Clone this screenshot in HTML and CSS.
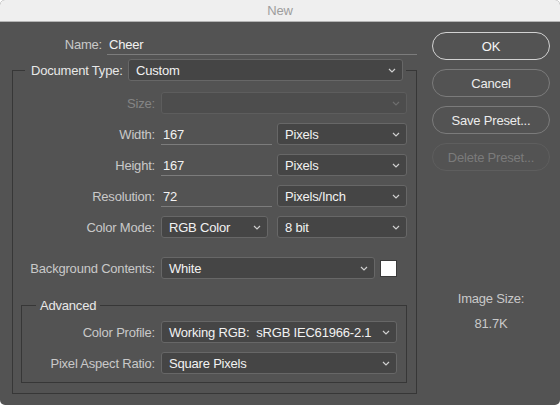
FILE: index.html
```html
<!DOCTYPE html>
<html>
<head>
<meta charset="utf-8">
<link rel="stylesheet" href="styles.css">
</head>
<body>
<div class="window">
  <div class="titlebar">New</div>
  <div class="body">
    <div class="main">
      <div class="name-row">
        <span class="lbl name-lbl">Name:</span>
        <div class="textfield name-field">Cheer</div>
      </div>
      <div class="group">
        <div class="group-head">
          <span class="lbl strong doc-lbl">Document Type:</span>
          <div class="select doc-select"><span>Custom</span><svg class="chev" width="8" height="5" viewBox="0 0 8 5"><polyline points="1,1 4,4 7,1"/></svg></div>
        </div>
        <div class="row first">
          <span class="lbl dis">Size:</span>
          <div class="select disabled size-select"><span></span><svg class="chev" width="8" height="5" viewBox="0 0 8 5"><polyline points="1,1 4,4 7,1"/></svg></div>
        </div>
        <div class="row">
          <span class="lbl">Width:</span>
          <div class="textfield num">167</div>
          <div class="select unit"><span>Pixels</span><svg class="chev" width="8" height="5" viewBox="0 0 8 5"><polyline points="1,1 4,4 7,1"/></svg></div>
        </div>
        <div class="row">
          <span class="lbl">Height:</span>
          <div class="textfield num">167</div>
          <div class="select unit"><span>Pixels</span><svg class="chev" width="8" height="5" viewBox="0 0 8 5"><polyline points="1,1 4,4 7,1"/></svg></div>
        </div>
        <div class="row">
          <span class="lbl">Resolution:</span>
          <div class="textfield num">72</div>
          <div class="select unit"><span>Pixels/Inch</span><svg class="chev" width="8" height="5" viewBox="0 0 8 5"><polyline points="1,1 4,4 7,1"/></svg></div>
        </div>
        <div class="row">
          <span class="lbl">Color Mode:</span>
          <div class="select mode"><span>RGB Color</span><svg class="chev" width="8" height="5" viewBox="0 0 8 5"><polyline points="1,1 4,4 7,1"/></svg></div>
          <div class="select unit bits"><span>8 bit</span><svg class="chev" width="8" height="5" viewBox="0 0 8 5"><polyline points="1,1 4,4 7,1"/></svg></div>
        </div>
        <div class="row bg-row">
          <span class="lbl">Background Contents:</span>
          <div class="select bg-select"><span>White</span><svg class="chev" width="8" height="5" viewBox="0 0 8 5"><polyline points="1,1 4,4 7,1"/></svg></div>
          <div class="swatch"></div>
        </div>
        <div class="subgroup">
          <div class="subgroup-head">Advanced</div>
          <div class="row sub first-sub">
            <span class="lbl">Color Profile:</span>
            <div class="select profile"><span>Working RGB:&nbsp; sRGB IEC61966-2.1</span><svg class="chev" width="8" height="5" viewBox="0 0 8 5"><polyline points="1,1 4,4 7,1"/></svg></div>
          </div>
          <div class="row sub">
            <span class="lbl">Pixel Aspect Ratio:</span>
            <div class="select profile"><span>Square Pixels</span><svg class="chev" width="8" height="5" viewBox="0 0 8 5"><polyline points="1,1 4,4 7,1"/></svg></div>
          </div>
        </div>
      </div>
    </div>
    <div class="side">
      <div class="btn primary">OK</div>
      <div class="btn">Cancel</div>
      <div class="btn">Save Preset...</div>
      <div class="btn off">Delete Preset...</div>
      <div class="info-label">Image Size:</div>
      <div class="info-value">81.7K</div>
    </div>
  </div>
</div>
</body>
</html>
```

FILE: styles.css
```css
* { box-sizing: border-box; }
html, body { margin: 0; padding: 0; background: #ffffff; }
body {
  font-family: "Liberation Sans", Arial, sans-serif;
  font-size: 13px;
  letter-spacing: -0.2px;
}
.window {
  width: 560px;
  height: 405px;
  background: #535353;
  border-radius: 5px;
  overflow: hidden;
  display: flex;
  flex-direction: column;
}
.titlebar {
  height: 22px;
  flex: none;
  background: #efefef;
  border-bottom: 1px solid #b4b4b4;
  color: #9d9d9d;
  text-align: center;
  line-height: 22px;
  font-size: 13px;
}
.body {
  display: flex;
  padding: 10px 0 0 12px;
}
.main {
  width: 405px;
  padding-top: 2px;
  display: flex;
  flex-direction: column;
}
.lbl {
  color: #c9c9c9;
  white-space: nowrap;
  padding-top: 1px;
}
.lbl.strong { color: #e8e8e8; }
.lbl.dis { color: #858585; }
.name-row {
  display: flex;
  align-items: flex-end;
  height: 21px;
}
.name-lbl {
  width: 90px;
  text-align: right;
  margin-right: 5px;
  line-height: 20px;
  align-self: flex-start;
}
.textfield {
  color: #f2f2f2;
  height: 21px;
  line-height: 20px;
  padding: 1px 0 0 2px;
  border-bottom: 1px solid #7c7c7c;
}
.name-field { flex: 1; }
.group {
  margin-top: 15px;
  border: 1px solid #373737;
  padding-bottom: 10px;
  display: flex;
  flex-direction: column;
}
.group-head {
  display: flex;
  align-items: center;
  align-self: flex-start;
  margin-top: -12px;
  margin-left: 12px;
  padding: 0 3px 0 6px;
  background: #535353;
  height: 22px;
}
.doc-lbl { width: 97px; }
.select {
  height: 22px;
  background: #454545;
  border: 1px solid #676767;
  border-radius: 3px;
  display: flex;
  align-items: center;
  justify-content: space-between;
  padding: 1px 6px 0 7px;
  color: #f2f2f2;
  white-space: nowrap;
}
.select .chev polyline {
  fill: none;
  stroke: #cfcfcf;
  stroke-width: 1.2;
}
.select.disabled {
  background: #4d4d4d;
  border-color: #5d5d5d;
}
.select.disabled .chev polyline { stroke: #6e6e6e; }
.doc-select { width: 275px; }
.row {
  display: flex;
  align-items: center;
  height: 22px;
  margin-top: 9px;
}
.row.first { margin-top: 11px; }
.row .lbl {
  width: 142px;
  text-align: right;
  margin-right: 6px;
}
.size-select { width: 246px; }
.num { width: 111px; margin-right: 5px; }
.unit { width: 130px; }
.mode { width: 107px; margin-right: 9px; }
.bg-row { margin-top: 19px; }
.bg-select { width: 214px; margin-right: 5px; }
.swatch {
  width: 17px;
  height: 17px;
  background: #ffffff;
  border: 1px solid #3a3a3a;
}
.subgroup {
  margin: 26px 9px 0 8px;
  border: 1px solid #373737;
  padding-bottom: 8px;
  display: flex;
  flex-direction: column;
}
.subgroup-head {
  align-self: flex-start;
  margin-top: -9px;
  margin-left: 14px;
  padding: 1px 4px 0;
  height: 17px;
  line-height: 16px;
  background: #535353;
  color: #e8e8e8;
}
.row.sub .lbl { width: 133px; }
.row.first-sub { margin-top: 7px; }
.profile { width: 236px; }
.side {
  width: 118px;
  margin-left: 15px;
  display: flex;
  flex-direction: column;
  align-items: stretch;
}
.btn {
  height: 28px;
  border: 1px solid #7b7b7b;
  border-radius: 14px;
  color: #ececec;
  display: flex;
  align-items: center;
  justify-content: center;
  padding-top: 1px;
  margin-bottom: 9px;
}
.btn.primary {
  border-color: #d2d2d2;
  color: #f5f5f5;
}
.btn.off {
  border-color: #5e5e5e;
  color: #7b7b7b;
}
.info-label {
  margin-top: 111px;
  text-align: center;
  color: #c9c9c9;
  line-height: 16px;
}
.info-value {
  margin-top: 9px;
  text-align: center;
  color: #c9c9c9;
  line-height: 16px;
}
```
